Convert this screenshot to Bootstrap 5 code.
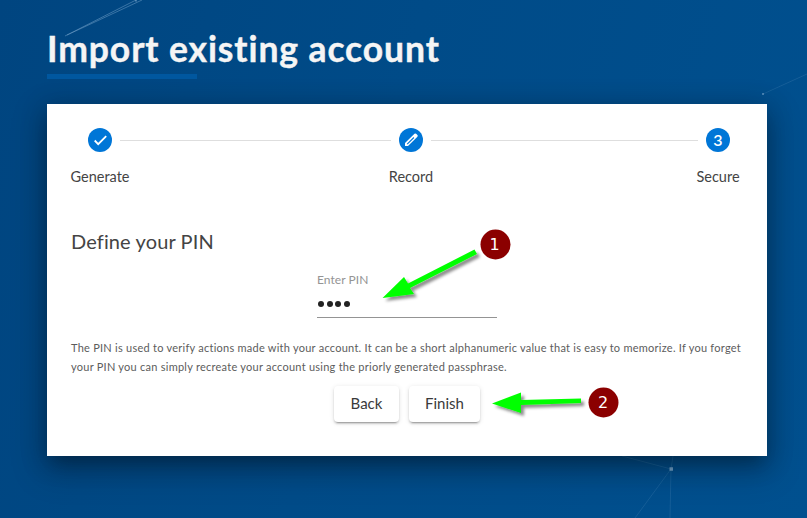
<!DOCTYPE html>
<html lang="en">
<head>
<meta charset="utf-8">
<meta name="viewport" content="width=device-width, initial-scale=1">
<title>Import existing account</title>
<link href="https://cdn.jsdelivr.net/npm/bootstrap@5.3.0/dist/css/bootstrap.min.css" rel="stylesheet">
<style>
body{font-family:Lato,sans-serif;width:807px;height:518px;overflow:hidden;background:linear-gradient(105deg,#004580 0%,#004b88 45%,#00508f 100%);color:#444}
.backdrop,.notes{left:0;top:0;pointer-events:none}
.page{padding:28px 40px 0 47px}
.title{font-size:35.5px;line-height:42px;font-weight:700;color:#f5f5f5;letter-spacing:.9px;-webkit-text-stroke:.4px #f5f5f5}
.title-bar{width:150px;height:5px;background:#00579f;margin-top:4px}
.panel{height:352px;margin-top:25px;padding:24px 24px 0;background:#fff;box-shadow:0 11px 15px -7px rgba(0,0,0,.2),0 12px 30px 3px rgba(0,0,0,.25),0 5px 24px 4px rgba(0,0,0,.12)}
.stepper{padding:0 5px 0 9px}
.step{width:40px;font-size:14.5px;line-height:20px}
.step-dot{width:24px;height:24px;background:#0076d7;color:#fff;font-size:16px;font-weight:600;line-height:24px}
.step-label{margin-top:15px}
.step-line{height:1px;margin-top:12px;background:#dedede;flex:267 1 0}
.step-line.first{flex-grow:271}
.section-title{font-size:20px;line-height:28px;margin-top:40px;letter-spacing:.12px}
.pin{width:180px;margin-top:18px}
.pin label{font-size:12px;line-height:14px;color:#949494;display:block;letter-spacing:.05px}
.pin-value{height:31px;border-bottom:1px solid #949494;gap:2.5px;padding:14px 0 0 1px}
.pin-value i{width:6px;height:6px;background:#222}
.hint{font-size:11px;line-height:19px;color:#5c5c5c;margin-top:20px;white-space:nowrap;letter-spacing:.25px}
.actions{gap:10px;margin-top:10px}
.action{height:36px;padding:0 0 2px;font-size:15px;color:#3a3a3a;background:#fff;border:0;border-radius:4px;box-shadow:0 3px 1px -2px rgba(0,0,0,.2),0 2px 2px rgba(0,0,0,.14),0 1px 5px rgba(0,0,0,.12)}
.back{width:65px}.finish{width:71px}
.notes text{font:16px "DejaVu Sans",sans-serif;fill:#fff;text-anchor:middle}
</style>
</head>
<body class="position-relative">
<svg class="backdrop position-absolute" width="807" height="518" fill="none" stroke="#8ab4d8">
  <path d="M65 36 136 0M67 35 142 0" stroke-opacity=".42"/>
  <path d="M763 94 807 74M671 469 622 456M671 469 673 456M671 469 635 518M671 469 670 518" stroke-opacity=".15"/>
  <path d="M669.5 469h3.5" stroke-width="3.5" stroke-opacity=".8"/><path d="M762 94h2M135 .5h2" stroke-width="2" stroke-opacity=".5"/>
</svg>
<main class="page position-relative">
  <h1 class="title m-0">Import existing account</h1>
  <div class="title-bar"></div>
  <section class="panel">
    <div class="stepper d-flex">
      <div class="step d-flex flex-column align-items-center text-nowrap">
        <span class="step-dot rounded-circle"><svg class="d-block" width="24" height="24" fill="none" stroke="#fff" stroke-width="1.8"><path d="m6.700 12.500 3.500 3.600 8-8"/></svg></span>
        <span class="step-label">Generate</span>
      </div>
      <div class="step-line first"></div>
      <div class="step d-flex flex-column align-items-center text-nowrap">
        <span class="step-dot rounded-circle"><svg class="d-block" width="24" height="24" fill="#fff"><path fill-rule="evenodd" d="M6 18v-3L15.500 5.800q.8-.7 1.600 0l1.300 1.300q.8.8 0 1.600L9 18zM7.800 15.700l.8.800 6.700-6.600-.8-.8z"/></svg></span>
        <span class="step-label">Record</span>
      </div>
      <div class="step-line"></div>
      <div class="step d-flex flex-column align-items-center text-nowrap">
        <span class="step-dot rounded-circle text-center">3</span>
        <span class="step-label">Secure</span>
      </div>
    </div>
    <h2 class="section-title fw-normal mb-0">Define your PIN</h2>
    <div class="pin mx-auto">
      <label>Enter PIN</label>
      <div class="pin-value d-flex"><i class="rounded-circle"></i><i class="rounded-circle"></i><i class="rounded-circle"></i><i class="rounded-circle"></i></div>
    </div>
    <p class="hint mb-0">The PIN is used to verify actions made with your account. It can be a short alphanumeric value that is easy to memorize. If you forget<br>your PIN you can simply recreate your account using the priorly generated passphrase.</p>
    <div class="actions d-flex justify-content-center">
      <button class="btn action back">Back</button>
      <button class="btn action finish">Finish</button>
    </div>
  </section>
</main>
<svg class="notes position-absolute" width="807" height="518">
  <defs><filter id="shade" x="-20%" y="-50%" width="150%" height="220%"><feDropShadow dx="3" dy="3" stdDeviation="1.5" flood-opacity=".45"/></filter></defs>
  <g fill="#0f0" filter="url(#shade)">
    <path d="M382.500 298 404 277l4 6.500L474.500 249.500l2.500 4.500-67 34 4 6z"/>
    <path d="m492 403.500 29-11v7.500l60-1.500v4.500l-60 2v8z"/>
  </g>
  <g fill="#8b0000"><circle cx="495.500" cy="244.500" r="15"/><circle cx="603.500" cy="402.500" r="15"/></g>
  <text x="494.500" y="250">1</text><text x="603" y="408">2</text>
</svg>
<script src="https://cdn.jsdelivr.net/npm/bootstrap@5.3.0/dist/js/bootstrap.bundle.min.js"></script>
</body>
</html>
